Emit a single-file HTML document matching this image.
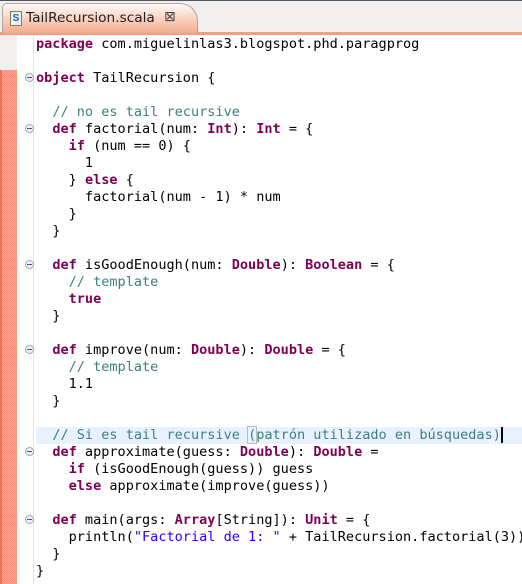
<!DOCTYPE html>
<html><head><meta charset="utf-8"><style>
*{margin:0;padding:0;box-sizing:border-box}
body{width:522px;height:584px;overflow:hidden;background:#fff;position:relative;font-family:"DejaVu Sans Mono","Liberation Mono",monospace}
#tabbar{position:absolute;left:0;top:0;width:522px;height:35px;background:#f0efee;border-top:1px solid #555}
#orange{position:absolute;left:0;top:32px;width:522px;height:3px;background:#f4a080}
#tab{position:absolute;left:2px;top:3px;width:196px;height:30px;background:linear-gradient(#fdfaf8,#f5ab8c);border:1px solid #b0a6a0;border-bottom:none;border-radius:5px 18px 0 0}
#tab .ic{position:absolute;left:7px;top:7px;width:12px;height:15px;border:1px solid #8a7a50;background:#e6eef8;font:bold 10px "Liberation Sans",sans-serif;color:#2c5fa8;text-align:center;line-height:13px}
#tab .t{position:absolute;left:23px;top:6px;font:13.7px "DejaVu Sans","Liberation Sans",sans-serif;color:#222}
#tab .x{position:absolute;left:161px;top:5px;font:14px "DejaVu Sans",sans-serif;color:#444}
#lstrip{position:absolute;left:0;top:35px;width:17px;height:549px;background:#f0efee}
#hatch{position:absolute;left:0;top:70px;width:17px;height:514px;background:#f3a287;background-image:repeating-conic-gradient(#f6b39b 0 25%,#ee8a6c 0 50%);background-size:2px 2px;border-left:2px solid #e07850}
#gut{position:absolute;left:33px;top:35px;width:1px;height:549px;background:#e4e4e4}
.fold{position:absolute;left:25px;width:9px;height:9px;border:1px solid #9aa;border-radius:50%;background:#eef}
.fold:after{content:"";position:absolute;left:1px;top:3px;width:5px;height:1px;background:#556}
#hl{position:absolute;left:36px;top:427px;width:486px;height:17px;background:#e8f2fe}
pre{position:absolute;left:36px;top:36px;font-size:13.55px;line-height:17px;color:#000;font-family:"DejaVu Sans Mono","Liberation Mono",monospace}
b{color:#7f0055}
i{font-style:normal;color:#3f7f7f}
s{text-decoration:none;color:#2a00ff}
.cur{border-right:2px solid #000}
.br{outline:1px solid #bbb}
</style></head><body>
<div id="tabbar"></div><div id="orange"></div>
<div id="tab"><div class="ic">S</div><div class="t">TailRecursion.scala</div><div class="x">⊠</div></div>
<div id="lstrip"></div><div id="hatch"></div><div id="gut"></div>
<div class="fold" style="top:73px"></div>
<div class="fold" style="top:124px"></div>
<div class="fold" style="top:260px"></div>
<div class="fold" style="top:345px"></div>
<div class="fold" style="top:447px"></div>
<div class="fold" style="top:515px"></div>
<div id="hl"></div>
<pre><b>package</b> com.miguelinlas3.blogspot.phd.paragprog

<b>object</b> TailRecursion {

  <i>// no es tail recursive</i>
  <b>def</b> factorial(num: <b>Int</b>): <b>Int</b> = {
    <b>if</b> (num == 0) {
      1
    } <b>else</b> {
      factorial(num - 1) * num
    }
  }

  <b>def</b> isGoodEnough(num: <b>Double</b>): <b>Boolean</b> = {
    <i>// template</i>
    <b>true</b>
  }

  <b>def</b> improve(num: <b>Double</b>): <b>Double</b> = {
    <i>// template</i>
    1.1
  }

  <i>// Si es tail recursive <span class="br">(</span>patrón utilizado en búsquedas<span class="cur">)</span></i>
  <b>def</b> approximate(guess: <b>Double</b>): <b>Double</b> =
    <b>if</b> (isGoodEnough(guess)) guess
    <b>else</b> approximate(improve(guess))

  <b>def</b> main(args: <b>Array</b>[String]): <b>Unit</b> = {
    println(<s>"Factorial de 1: "</s> + TailRecursion.factorial(3))
  }
}</pre>
</body></html>
